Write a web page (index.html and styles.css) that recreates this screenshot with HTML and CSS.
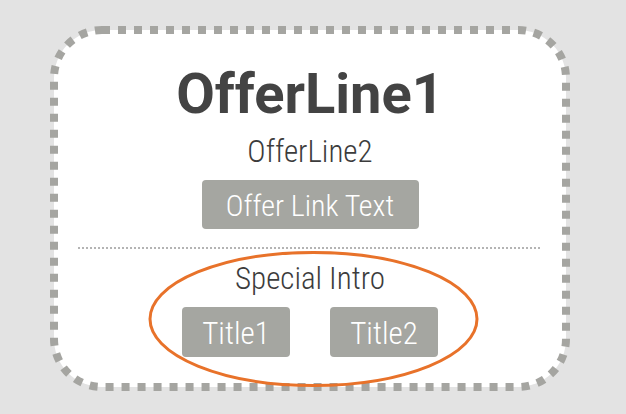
FILE: index.html
```html
<!DOCTYPE html>
<html lang="en">
<head>
<meta charset="UTF-8" />
<meta name="viewport" content="width=device-width, initial-scale=1" />
<title>Offer</title>
<link rel="stylesheet" href="styles.css">
</head>
<body>
<div class="card">
    <svg class="card-frame" width="520" height="365" viewBox="0 0 520 365" aria-hidden="true">
        <rect x="4" y="4" width="512" height="357" rx="48" ry="48" fill="#ffffff" stroke="#a5a5a1" stroke-width="8" stroke-dasharray="8 8" />
        <ellipse cx="263.5" cy="293" rx="163.5" ry="66.5" fill="none" stroke="#e8722a" stroke-width="3" />
    </svg>
    <div class="offer">
        <h1 class="offer-line1">OfferLine1</h1>
        <p class="offer-line2">OfferLine2</p>
        <a class="btn btn-offer" href="#">Offer Link Text</a>
    </div>
    <div class="divider"></div>
    <div class="special">
        <p class="special-intro">Special Intro</p>
        <div class="special-titles">
            <a class="btn btn-title" href="#">Title1</a>
            <a class="btn btn-title" href="#">Title2</a>
        </div>
    </div>
</div>
</body>
</html>
```

FILE: styles.css
```css
body {
    margin: 0;
    background-color: #e3e3e3;
    font-family: Roboto, "Noto Sans", sans-serif;
    color: #444444;
}
.card {
    position: relative;
    box-sizing: border-box;
    width: 520px;
    height: 365px;
    margin: 26px 0 0 50px;
    padding: 40px 28px 0;
}
.card-frame {
    position: absolute;
    top: 0;
    left: 0;
}
.offer,
.special {
    position: relative;
    display: flex;
    flex-direction: column;
    align-items: center;
}
.offer-line1 {
    margin: 0;
    font-size: 56px;
    line-height: 56px;
    font-weight: 700;
    color: #434343;
}
.offer-line2,
.special-intro {
    margin: 14px 0 0;
    font-size: 31px;
    line-height: 32px;
    font-weight: 300;
    font-stretch: condensed;
    color: #3c3c3c;
}
.btn {
    display: block;
    box-sizing: border-box;
    background-color: #a5a6a1;
    color: #ffffff;
    text-decoration: none;
    font-weight: 300;
    font-stretch: condensed;
    border-radius: 4px;
    text-align: center;
}
.btn-offer {
    margin-top: 12px;
    width: 217px;
    height: 49px;
    padding-top: 3px;
    font-size: 30px;
    line-height: 46px;
}
.divider {
    position: relative;
    height: 2px;
    margin-top: 18px;
    background: repeating-linear-gradient(90deg, #b4b4b4 0 2px, transparent 2px 4px);
}
.special-intro {
    margin-top: 14px;
}
.special-titles {
    display: flex;
    gap: 40px;
    margin-top: 12px;
}
.btn-title {
    width: 108px;
    height: 50px;
    padding-top: 4px;
    font-size: 31px;
    line-height: 46px;
}
```
